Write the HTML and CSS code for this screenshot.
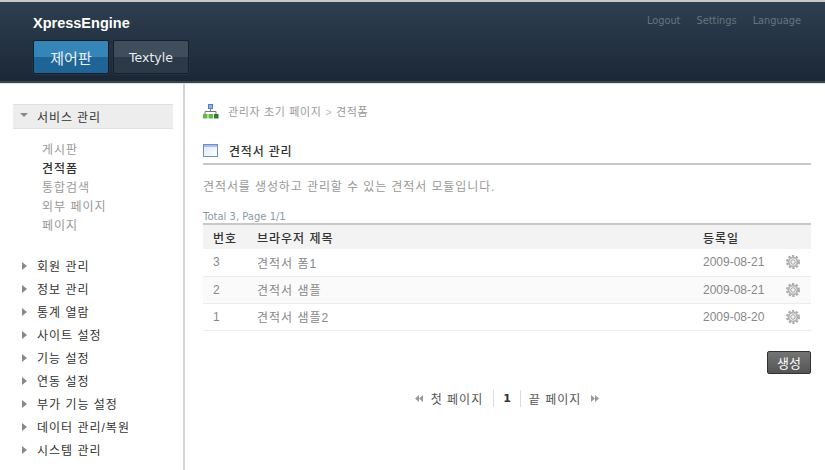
FILE: index.html
```html
<!DOCTYPE html>
<html lang="ko">
<head>
<meta charset="utf-8">
<title>XpressEngine</title>
<link rel="stylesheet" href="styles.css">
</head>
<body>
<svg class="defs" width="0" height="0">
  <defs>
    <g id="gear">
      <circle cx="7" cy="7" r="6" fill="none" stroke="#a8a8a8" stroke-width="2" stroke-dasharray="2.2 1.6"/>
      <circle cx="7" cy="7" r="4.4" fill="none" stroke="#b4b4b4" stroke-width="2"/>
      <circle cx="7" cy="7" r="2.3" fill="#f2f2f2" stroke="#8c8c8c" stroke-width="0.8"/>
    </g>
  </defs>
</svg>
<div class="page">
  <div class="topline"></div>
  <header class="header">
    <div class="brand">
      <div class="logo">XpressEngine</div>
      <nav class="tabs">
        <a class="tab tab-on">제어판</a>
        <a class="tab">Textyle</a>
      </nav>
    </div>
    <nav class="gnb"><a>Logout</a><a>Settings</a><a>Language</a></nav>
  </header>
  <div class="body">
    <aside class="side">
      <div class="group-open"><span class="tri-down"></span>서비스 관리</div>
      <ul class="sub">
        <li>게시판</li>
        <li class="sub-on">견적폼</li>
        <li>통합검색</li>
        <li>외부 페이지</li>
        <li>페이지</li>
      </ul>
      <ul class="groups">
        <li><span class="tri-right"></span>회원 관리</li>
        <li><span class="tri-right"></span>정보 관리</li>
        <li><span class="tri-right"></span>통계 열람</li>
        <li><span class="tri-right"></span>사이트 설정</li>
        <li><span class="tri-right"></span>기능 설정</li>
        <li><span class="tri-right"></span>연동 설정</li>
        <li><span class="tri-right"></span>부가 기능 설정</li>
        <li><span class="tri-right"></span>데이터 관리/복원</li>
        <li><span class="tri-right"></span>시스템 관리</li>
      </ul>
    </aside>
    <main class="main">
      <div class="crumb">
        <svg class="crumb-icon" width="16" height="15" viewBox="0 0 16 15">
          <rect x="5.500" y="0.500" width="4" height="4" fill="#8fb4ec" stroke="#4f7fc8"/>
          <path d="M7.500 5v2.500M2 10V7.500h11V10" fill="none" stroke="#777"/>
          <rect x="0" y="10" width="4.500" height="4.500" fill="#66b84a"/>
          <rect x="5.500" y="10" width="4.500" height="4.500" fill="#66b84a"/>
          <rect x="11" y="10" width="4.500" height="4.500" fill="#2f7f2a"/>
        </svg>
        <span>관리자 초기 페이지 <i class="gt">&gt;</i> 견적폼</span>
      </div>
      <h2 class="title">
        <svg class="title-icon" width="15" height="14" viewBox="0 0 15 14">
          <defs>
            <linearGradient id="win" x1="0" y1="0" x2="1" y2="1">
              <stop offset="0" stop-color="#dfe6f4"/>
              <stop offset="1" stop-color="#ffffff"/>
            </linearGradient>
          </defs>
          <rect x="0.500" y="0.500" width="14" height="12" fill="url(#win)" stroke="#6f8fc4"/>
          <rect x="1" y="1" width="13" height="2" fill="#a5c0ec"/>
        </svg>
        견적서 관리
      </h2>
      <p class="desc">견적서를 생성하고 관리할 수 있는 견적서 모듈입니다.</p>
      <div class="total">Total 3, Page 1/1</div>
      <table class="list">
        <thead>
          <tr><th class="c-no">번호</th><th>브라우저 제목</th><th class="c-date">등록일</th><th class="c-gear"></th></tr>
        </thead>
        <tbody>
          <tr><td class="c-no">3</td><td>견적서 폼1</td><td class="c-date">2009-08-21</td><td class="c-gear"><svg class="gear" width="14" height="14" viewBox="0 0 14 14"><use href="#gear"/></svg></td></tr>
          <tr class="alt"><td class="c-no">2</td><td>견적서 샘플</td><td class="c-date">2009-08-21</td><td class="c-gear"><svg class="gear" width="14" height="14" viewBox="0 0 14 14"><use href="#gear"/></svg></td></tr>
          <tr><td class="c-no">1</td><td>견적서 샘플2</td><td class="c-date">2009-08-20</td><td class="c-gear"><svg class="gear" width="14" height="14" viewBox="0 0 14 14"><use href="#gear"/></svg></td></tr>
        </tbody>
      </table>
      <div class="actions"><button class="btn">생성</button></div>
      <div class="pager">
        <svg class="arrows" width="8" height="7" viewBox="0 0 8 7"><path d="M4 0v7L0 3.500zM8 0v7L4 3.500z" fill="#999"/></svg>
        <a class="pg-text">첫 페이지</a>
        <strong class="pg-num">1</strong>
        <a class="pg-text">끝 페이지</a>
        <svg class="arrows" width="8" height="7" viewBox="0 0 8 7"><path d="M0 0v7l4-3.500zM4 0v7l4-3.500z" fill="#999"/></svg>
      </div>
    </main>
  </div>
</div>
</body>
</html>
```
FILE: styles.css
```css
* { box-sizing: border-box; }
html, body { margin: 0; padding: 0; background: #fff; }
body { font-family: "Liberation Sans", "Noto Sans CJK KR", sans-serif; font-size: 12px; color: #888; overflow: hidden; }
.defs { position: absolute; }
.page { width: 825px; height: 470px; display: flex; flex-direction: column; overflow: hidden; }
.topline { height: 2px; background: #c8c8c8; flex: none; }
.header { height: 81px; flex: none; padding: 0 24px 0 33px; display: flex; justify-content: space-between; background: linear-gradient(#2f3f50, #1a2736); border-bottom: 2px solid #3a4552; box-shadow: 0 1px 1px #dfe3e8; }
.logo { font-weight: bold; font-size: 14.5px; color: #fff; line-height: 18px; margin-top: 12px; }
.tabs { display: flex; gap: 4px; margin-top: 8px; }
.tab { width: 76px; height: 34px; display: flex; align-items: center; justify-content: center; border-radius: 2px; border: 1px solid #16202b; color: #e8edf2; font-size: 12.5px; font-family: "DejaVu Sans", "Noto Sans CJK KR", sans-serif; background: linear-gradient(#3f4d5c 0 50%, #2c3947 50% 100%); box-shadow: 0 0 0 1px #26323f; }
.tab-on { background: linear-gradient(#3585b9 0 50%, #1f6496 50% 100%); color: #e8f2f8; font-size: 15px; }
.gnb { display: flex; gap: 16px; margin-top: 12px; font-family: "DejaVu Sans", sans-serif; font-size: 9.8px; color: #69747f; line-height: 14px; }
.body { flex: 1; display: flex; min-height: 0; }
.side { width: 185px; flex: none; border-right: 2px solid #d5d5d5; padding: 21px 10px 0 13px; font-size: 12px; }
.group-open { height: 25px; background: #ededed; border-top: 1px solid #e0e0e0; border-bottom: 1px solid #e0e0e0; color: #333; display: flex; align-items: center; padding-left: 7px; letter-spacing: 0.9px; }
.tri-down { width: 0; height: 0; border: 4px solid transparent; border-top: 4px solid #888; border-bottom: 0; margin-right: 9px; margin-top: -3px; }
.sub { list-style: none; margin: 0; padding: 12px 0 0 29px; color: #999; }
.sub li { height: 19px; line-height: 19px; letter-spacing: 1px; }
.sub .sub-on { color: #333; font-weight: 500; }
.groups { list-style: none; margin: 0; padding: 20px 0 0 9px; color: #333; }
.groups li { height: 23px; line-height: 23px; display: flex; align-items: center; letter-spacing: 1px; }
.tri-right { width: 0; height: 0; border: 4px solid transparent; border-left: 5px solid #888; border-right: 0; margin-right: 10px; margin-top: -4px; }
.main { flex: 1; padding: 18px 14px 0 18px; min-width: 0; }
.crumb { display: flex; align-items: center; height: 20px; color: #999; font-size: 11px; letter-spacing: 0.65px; }
.crumb-icon { margin-right: 9px; }
.gt { font-style: normal; color: #bbb; }
.title { display: flex; align-items: center; margin: 17px 0 0; height: 27px; border-bottom: 2px solid #c8c8c8; font-size: 12px; font-weight: 500; color: #333; letter-spacing: 0.8px; }
.title-icon { margin-right: 11px; }
.desc { margin: 14px 0 0; font-size: 12px; line-height: 16px; color: #999; letter-spacing: 0.9px; }
.total { margin-top: 15px; font-family: "DejaVu Sans", sans-serif; font-size: 10px; color: #8b98a5; line-height: 13px; }
.list { width: 100%; border-collapse: collapse; border-top: 2px solid #c8c8c8; font-size: 12px; }
.list th { background: #f3f3f3; font-weight: 500; color: #333; height: 25px; text-align: left; padding: 0; letter-spacing: 1px; }
.list td { height: 27px; padding: 0; color: #888; border-bottom: 1px solid #ececec; letter-spacing: 1px; }
.alt td { background: #fafafa; }
.c-no { width: 54px; padding-left: 10px !important; }
.list td.c-date { width: 83px; font-size: 12px; letter-spacing: 0; }
.c-gear { width: 25px; }
.gear { display: block; }
.actions { display: flex; justify-content: flex-end; margin-top: 20px; }
.btn { width: 44px; height: 23px; padding: 0; border: 1px solid #333; border-radius: 2px; background: linear-gradient(#747474, #555); color: #fff; font-family: inherit; font-size: 13px; }
.pager { display: flex; justify-content: center; align-items: center; margin-top: 15px; height: 19px; color: #555; }
.arrows { flex: none; }
.pg-text { padding: 0 10px 0 8px; letter-spacing: 1px; }
.pg-num { padding: 0 9px; border-left: 1px solid #ddd; border-right: 1px solid #ddd; line-height: 17px; font-family: "DejaVu Sans", sans-serif; font-size: 11px; color: #333; }
```
